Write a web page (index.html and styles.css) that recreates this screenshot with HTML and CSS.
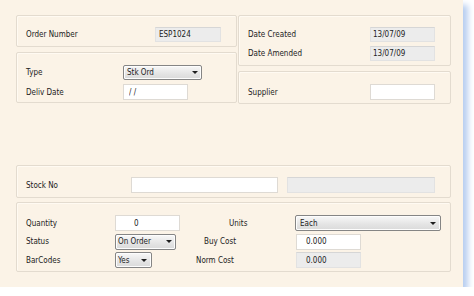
FILE: index.html
```html
<!DOCTYPE html>
<html lang="en">
  <head>
    <meta charset="UTF-8" />
    <meta name="viewport" content="width=device-width, initial-scale=1.0" />
    <title>Order</title>
    <link rel="stylesheet" href="styles.css">
  </head>

  <body>
    <div class="window">
      <div class="top">
        <div class="col">
          <section class="panel panel-order">
            <div class="row">
              <label>Order Number</label>
              <input class="field readonly" value="ESP1024" readonly />
            </div>
          </section>
          <section class="panel panel-type">
            <div class="row">
              <label>Type</label>
              <div class="combo w-type">Stk Ord</div>
            </div>
            <div class="row row-tall">
              <label>Deliv Date</label>
              <input class="field pad-date" value="/ /" />
            </div>
          </section>
        </div>
        <div class="col">
          <section class="panel panel-dates">
            <div class="row">
              <label>Date Created</label>
              <input class="field readonly pad-s" value="13/07/09" readonly />
            </div>
            <div class="row">
              <label>Date Amended</label>
              <input class="field readonly pad-s" value="13/07/09" readonly />
            </div>
          </section>
          <section class="panel panel-supplier">
            <div class="row row-tall">
              <label>Supplier</label>
              <input class="field" value="" />
            </div>
          </section>
        </div>
      </div>

      <section class="panel panel-stock">
        <div class="row row-tall">
          <label>Stock No</label>
          <input class="field w-stock" value="" />
          <input class="field readonly w-desc" value="" readonly />
        </div>
      </section>

      <section class="panel panel-item">
        <label>Quantity</label>
        <input class="field pad-qty" value="0" />
        <label class="lbl-units">Units</label>
        <div class="combo w-units pad-each">Each</div>

        <label>Status</label>
        <div class="combo w-status">On Order</div>
        <label class="lbl-buy">Buy Cost</label>
        <input class="field pad-cost shift" value="0.000" />

        <label>BarCodes</label>
        <div class="combo w-yes">Yes</div>
        <label class="lbl-norm">Norm Cost</label>
        <input class="field readonly pad-cost shift" value="0.000" readonly />
      </section>
    </div>
  </body>
</html>
```

FILE: styles.css
```css
body {
  margin: 0;
  background: #fff;
  font-family: "DejaVu Sans Condensed", "DejaVu Sans", sans-serif;
  font-stretch: condensed;
  font-size: 8px;
  color: #222;
}

.window {
  box-sizing: border-box;
  width: 463px;
  height: 287px;
  padding: 15px 0 0 16px;
  background: #fbf3e7;
  box-shadow: 5px 5px 6px #b8cef0;
}

.top {
  display: grid;
  grid-template-columns: 221px 213px;
  column-gap: 1px;
  align-items: start;
}
.col {
  display: flex;
  flex-direction: column;
  gap: 5px;
}

/* group boxes */
.panel {
  box-sizing: border-box;
  border: 1px solid #e3dbcf;
  border-radius: 2px;
  box-shadow: inset 1px 1px 0 #fffaf2;
  padding: 11px 0 0 9px;
}
.panel-order {
  height: 32px;
}
.panel-type {
  height: 51px;
  padding-top: 12px;
}
.panel-dates {
  height: 51px;
}
.panel-supplier {
  height: 33px;
  padding-top: 12px;
}
.panel-stock {
  width: 435px;
  height: 33px;
  margin-top: 61px;
}
.panel-item {
  width: 435px;
  height: 70px;
  margin-top: 4px;
  padding-top: 12px;
  display: grid;
  grid-template-columns: 89px 65px 115px 146px;
  grid-auto-rows: 16px;
  row-gap: 2.5px;
  align-items: center;
  justify-items: start;
}

.row {
  display: flex;
  align-items: center;
  height: 15px;
  margin-bottom: 4px;
}
.row-tall {
  height: 16px;
}
.row label {
  flex: none;
}
.panel-order label {
  width: 129px;
}
.panel-type label {
  width: 97px;
}
.panel-dates label,
.panel-supplier label {
  width: 122px;
}
.panel-stock label {
  width: 105px;
}

/* text boxes */
.field {
  box-sizing: border-box;
  width: 65px;
  height: 100%;
  margin: 0;
  padding: 0 3px;
  border: 1px solid #dedad4;
  background: #fff;
  font: inherit;
  color: #222;
  outline: none;
}
.panel-item .field {
  height: 16px;
}
.readonly {
  background: #ececec;
  border-color: #e2e2e2;
  border-top-color: #d6d6d6;
}
.panel-order .field {
  width: 66px;
}
.pad-s {
  padding-left: 2px;
}
.pad-date {
  padding-left: 5px;
}
.pad-qty {
  padding-left: 18px;
}
.pad-cost {
  padding-left: 9px;
}
.shift {
  margin-left: 1px;
}
.w-stock {
  width: 147px;
}
.w-desc {
  width: 148px;
  margin-left: 9px;
}

/* drop downs */
.combo {
  box-sizing: border-box;
  display: flex;
  align-items: center;
  justify-content: space-between;
  height: 15px;
  padding: 0 3px 0 2px;
  border: 1px solid #858585;
  border-radius: 2px;
  background: linear-gradient(#f8f8f8, #e4e4e4 60%, #dadada);
  box-shadow: inset 0 0 0 1px #fdfdfd;
}
.combo::after {
  content: "";
  border-top: 3px solid #1e1e1e;
  border-left: 3px solid transparent;
  border-right: 3px solid transparent;
}
.panel-item .combo {
  height: 16px;
}
.w-type {
  width: 79px;
  padding-left: 3px;
}
.w-status {
  width: 61px;
}
.w-yes {
  width: 37px;
  padding-right: 4px;
}
.w-units {
  width: 146px;
  padding-left: 4px;
  padding-right: 4px;
}

.lbl-units {
  padding-left: 49px;
}
.lbl-buy {
  padding-left: 24px;
}
.lbl-norm {
  padding-left: 16px;
}
```
